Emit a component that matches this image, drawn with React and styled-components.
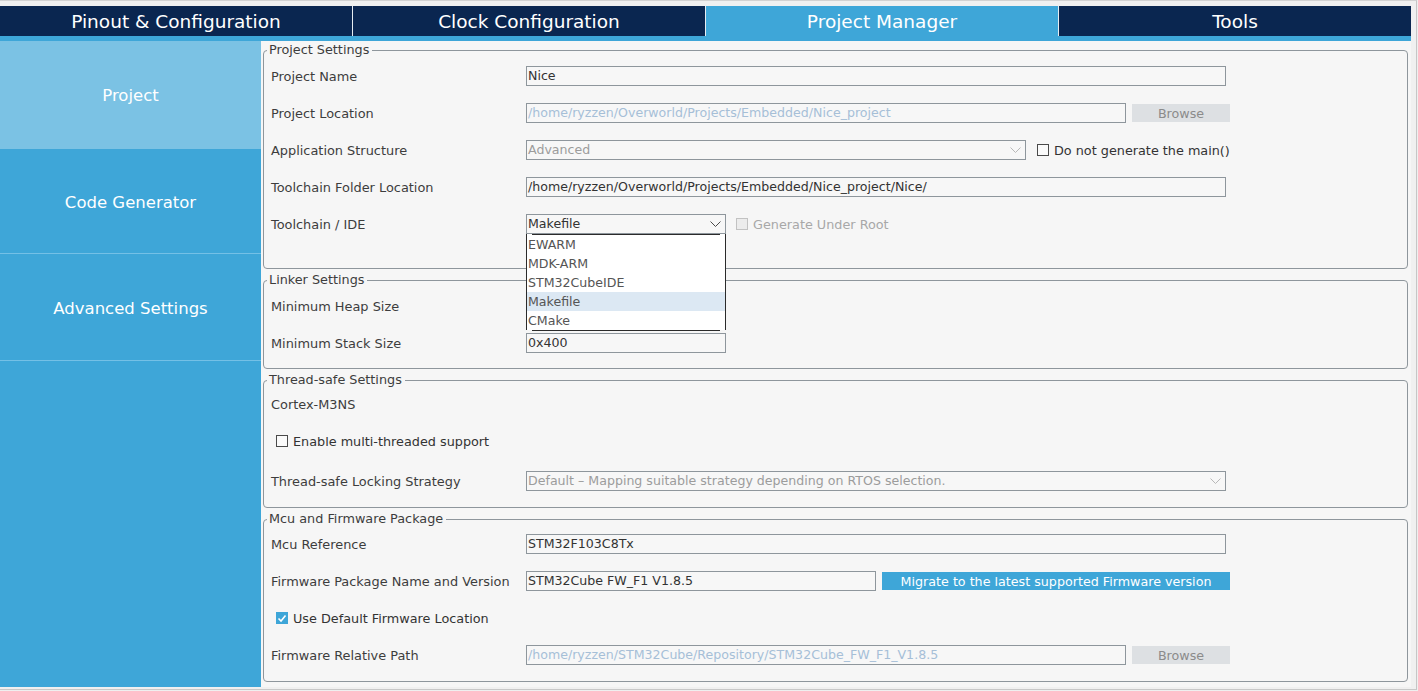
import React from "react";
import styled, { createGlobalStyle, css } from "styled-components";

const Global = createGlobalStyle`
  html, body { margin: 0; padding: 0; background: #efefef; }
  body { font-family: "DejaVu Sans", "Liberation Sans", sans-serif; }
  * { box-sizing: border-box; }
`;

const Frame = styled.div`
  width: 1417px;
  height: 690px;
  border-top: 1px solid #d2d2d2;
  border-right: 1px solid #c6c6c6;
  border-bottom: 1px solid #c8c8c8;
  padding: 5px 5px 1px 0;
  background: #f0f0f0;
`;

const TabBar = styled.div`
  display: flex;
  gap: 1px;
  height: 30px;
  background: #e6ecf1;
`;

const Tab = styled.div`
  flex: 1;
  display: flex;
  align-items: center;
  justify-content: center;
  font-size: 18.5px;
  color: #ffffff;
  background: ${(p) => (p.$active ? "#3ea6d8" : "#0a2650")};
`;

const Strip = styled.div`
  height: 5px;
  background: #3ea6d8;
`;

const Body = styled.div`
  display: flex;
  height: 646px;
`;

const Sidebar = styled.nav`
  width: 261px;
  flex-shrink: 0;
  background: #3ea6d8;
  display: flex;
  flex-direction: column;
`;

const SideItem = styled.div`
  height: ${(p) => p.$h}px;
  display: flex;
  align-items: center;
  justify-content: center;
  padding-top: ${(p) => (p.$active ? 0 : 3)}px;
  font-size: 16.5px;
  color: #ffffff;
  background: ${(p) => (p.$active ? "#7bc2e4" : "transparent")};
  border-bottom: ${(p) => (p.$line ? "1px solid #74c0e6" : "none")};
`;

const Content = styled.main`
  flex: 1;
  background: #f6f6f6;
  padding: 2px 3px 0 2px;
  display: flex;
  flex-direction: column;
  gap: 4px;
`;

const Group = styled.fieldset`
  margin: 0;
  min-width: 0;
  border: 1px solid #8e969c;
  border-radius: 4px;
  padding: ${(p) => p.$pt ?? 9}px 0 ${(p) => p.$pb ?? 15}px 0;
`;

const Legend = styled.legend`
  margin-left: 3px;
  padding: 0 3px 0 2px;
  font-size: 12.8px;
  line-height: 14px;
  color: #3d3d3d;
`;

const Rows = styled.div`
  display: flex;
  flex-direction: column;
  gap: 17px;
`;

const Row = styled.div`
  display: flex;
  align-items: center;
  height: 20px;
  padding-left: ${(p) => p.$indent ?? 7}px;
  margin-top: ${(p) => p.$mt ?? 0}px;
`;

const Label = styled.div`
  width: 255px;
  flex-shrink: 0;
  font-size: 12.9px;
  color: #3d3d3d;
  white-space: nowrap;
`;

const PlainText = styled.div`
  font-size: 12.9px;
  color: #3d3d3d;
`;

const Box = styled.div`
  position: relative;
  width: ${(p) => p.$w}px;
  height: 20px;
  flex-shrink: 0;
  border: 1px solid #8e969c;
  background: #f7f7f7;
  font-size: 12.6px;
  line-height: 18px;
  padding-left: 1px;
  white-space: nowrap;
  overflow: ${(p) => (p.$open ? "visible" : "hidden")};
  color: ${(p) =>
    p.$tone === "path" ? "#a6bfd7" : p.$tone === "muted" ? "#9c9c9c" : "#333333"};
`;

const Chevron = styled.svg`
  position: absolute;
  right: 4px;
  top: 6px;
`;

const GrayButton = styled.div`
  width: 98px;
  height: 18px;
  margin-left: 6px;
  background: #dde0e3;
  color: #8b8b8b;
  font-size: 12.7px;
  display: flex;
  align-items: center;
  justify-content: center;
`;

const BlueButton = styled.div`
  width: 348px;
  height: 18px;
  margin-left: 6px;
  background: #3ea6d8;
  color: #ffffff;
  font-size: 12.7px;
  display: flex;
  align-items: center;
  justify-content: center;
`;

const Check = styled.label`
  display: flex;
  align-items: center;
  gap: 5px;
  margin-left: ${(p) => p.$ml ?? 0}px;
  font-size: 12.8px;
  color: ${(p) => (p.$disabled ? "#a8a8a8" : "#333333")};
  white-space: nowrap;
`;

const CheckBox = styled.span`
  width: 12px;
  height: 12px;
  flex-shrink: 0;
  display: flex;
  align-items: center;
  justify-content: center;
  ${(p) =>
    p.$checked
      ? css`
          background: #3ea6d8;
        `
      : p.$disabled
      ? css`
          border: 1px solid #c2c2c2;
          background: #ececec;
        `
      : css`
          border: 1px solid #4a4a4a;
          background: #fafafa;
        `}
`;

const Popup = styled.div`
  position: absolute;
  left: -1px;
  top: 19px;
  width: 200px;
  z-index: 10;
  background: #ffffff;
  border-left: 1px solid #2b2b2b;
  border-right: 1px solid #2b2b2b;
  padding-top: 1px;
  &::before,
  &::after {
    content: "";
    position: absolute;
    left: 5px;
    right: 5px;
    height: 1px;
    background: #2b2b2b;
  }
  &::before { top: 0; }
  &::after { bottom: -1px; }
`;

const PopupItem = styled.div`
  height: 19px;
  line-height: 19px;
  padding-left: 1px;
  font-size: 12.6px;
  color: #555555;
  background: ${(p) => (p.$hl ? "#dce8f3" : "#ffffff")};
`;

function Arrow({ dark }) {
  return (
    <Chevron width="11" height="7" viewBox="0 0 11 7">
      <polyline
        points="0.5,0.5 5.5,5.5 10.5,0.5"
        fill="none"
        stroke={dark ? "#4a4a4a" : "#b8b8b8"}
        strokeWidth="1"
      />
    </Chevron>
  );
}

function CheckItem({ checked, disabled, ml, children }) {
  return (
    <Check $disabled={disabled} $ml={ml}>
      <CheckBox $checked={checked} $disabled={disabled}>
        {checked && (
          <svg width="10" height="9" viewBox="0 0 10 9">
            <polyline points="1.5,4.5 4,7 8.5,1.5" fill="none" stroke="#ffffff" strokeWidth="1.6" />
          </svg>
        )}
      </CheckBox>
      {children}
    </Check>
  );
}

const tabs = ["Pinout & Configuration", "Clock Configuration", "Project Manager", "Tools"];
const toolchains = ["EWARM", "MDK-ARM", "STM32CubeIDE", "Makefile", "CMake"];

export default function App() {
  return (
    <>
      <Global />
      <Frame>
        <TabBar>
          {tabs.map((t) => (
            <Tab key={t} $active={t === "Project Manager"}>{t}</Tab>
          ))}
        </TabBar>
        <Strip />
        <Body>
          <Sidebar>
            <SideItem $h={108} $active>Project</SideItem>
            <SideItem $h={105} $line>Code Generator</SideItem>
            <SideItem $h={107} $line>Advanced Settings</SideItem>
          </Sidebar>
          <Content>
            <Group $pb={34}>
              <Legend>Project Settings</Legend>
              <Rows>
                <Row>
                  <Label>Project Name</Label>
                  <Box $w={700}>Nice</Box>
                </Row>
                <Row>
                  <Label>Project Location</Label>
                  <Box $w={600} $tone="path">/home/ryzzen/Overworld/Projects/Embedded/Nice_project</Box>
                  <GrayButton>Browse</GrayButton>
                </Row>
                <Row>
                  <Label>Application Structure</Label>
                  <Box $w={500} $tone="muted">
                    Advanced
                    <Arrow />
                  </Box>
                  <CheckItem ml={11}>Do not generate the main()</CheckItem>
                </Row>
                <Row>
                  <Label>Toolchain Folder Location</Label>
                  <Box $w={700}>/home/ryzzen/Overworld/Projects/Embedded/Nice_project/Nice/</Box>
                </Row>
                <Row>
                  <Label>Toolchain / IDE</Label>
                  <Box $w={200} $open>
                    Makefile
                    <Arrow dark />
                    <Popup>
                      {toolchains.map((t) => (
                        <PopupItem key={t} $hl={t === "Makefile"}>{t}</PopupItem>
                      ))}
                    </Popup>
                  </Box>
                  <CheckItem ml={10} disabled>Generate Under Root</CheckItem>
                </Row>
              </Rows>
            </Group>

            <Group>
              <Legend>Linker Settings</Legend>
              <Rows>
                <Row>
                  <Label>Minimum Heap Size</Label>
                  <Box $w={200} />
                </Row>
                <Row>
                  <Label>Minimum Stack Size</Label>
                  <Box $w={200}>0x400</Box>
                </Row>
              </Rows>
            </Group>

            <Group $pt={7} $pb={16}>
              <Legend>Thread-safe Settings</Legend>
              <Rows>
                <Row>
                  <PlainText>Cortex-M3NS</PlainText>
                </Row>
                <Row $indent={12}>
                  <CheckItem>Enable multi-threaded support</CheckItem>
                </Row>
                <Row $mt={3}>
                  <Label>Thread-safe Locking Strategy</Label>
                  <Box $w={700} $tone="muted">
                    Default – Mapping suitable strategy depending on RTOS selection.
                    <Arrow />
                  </Box>
                </Row>
              </Rows>
            </Group>

            <Group $pt={8} $pb={16}>
              <Legend>Mcu and Firmware Package</Legend>
              <Rows>
                <Row>
                  <Label>Mcu Reference</Label>
                  <Box $w={700}>STM32F103C8Tx</Box>
                </Row>
                <Row>
                  <Label>Firmware Package Name and Version</Label>
                  <Box $w={350}>STM32Cube FW_F1 V1.8.5</Box>
                  <BlueButton>Migrate to the latest supported Firmware version</BlueButton>
                </Row>
                <Row $indent={12}>
                  <CheckItem checked>Use Default Firmware Location</CheckItem>
                </Row>
                <Row>
                  <Label>Firmware Relative Path</Label>
                  <Box $w={600} $tone="path">/home/ryzzen/STM32Cube/Repository/STM32Cube_FW_F1_V1.8.5</Box>
                  <GrayButton>Browse</GrayButton>
                </Row>
              </Rows>
            </Group>
          </Content>
        </Body>
      </Frame>
    </>
  );
}
